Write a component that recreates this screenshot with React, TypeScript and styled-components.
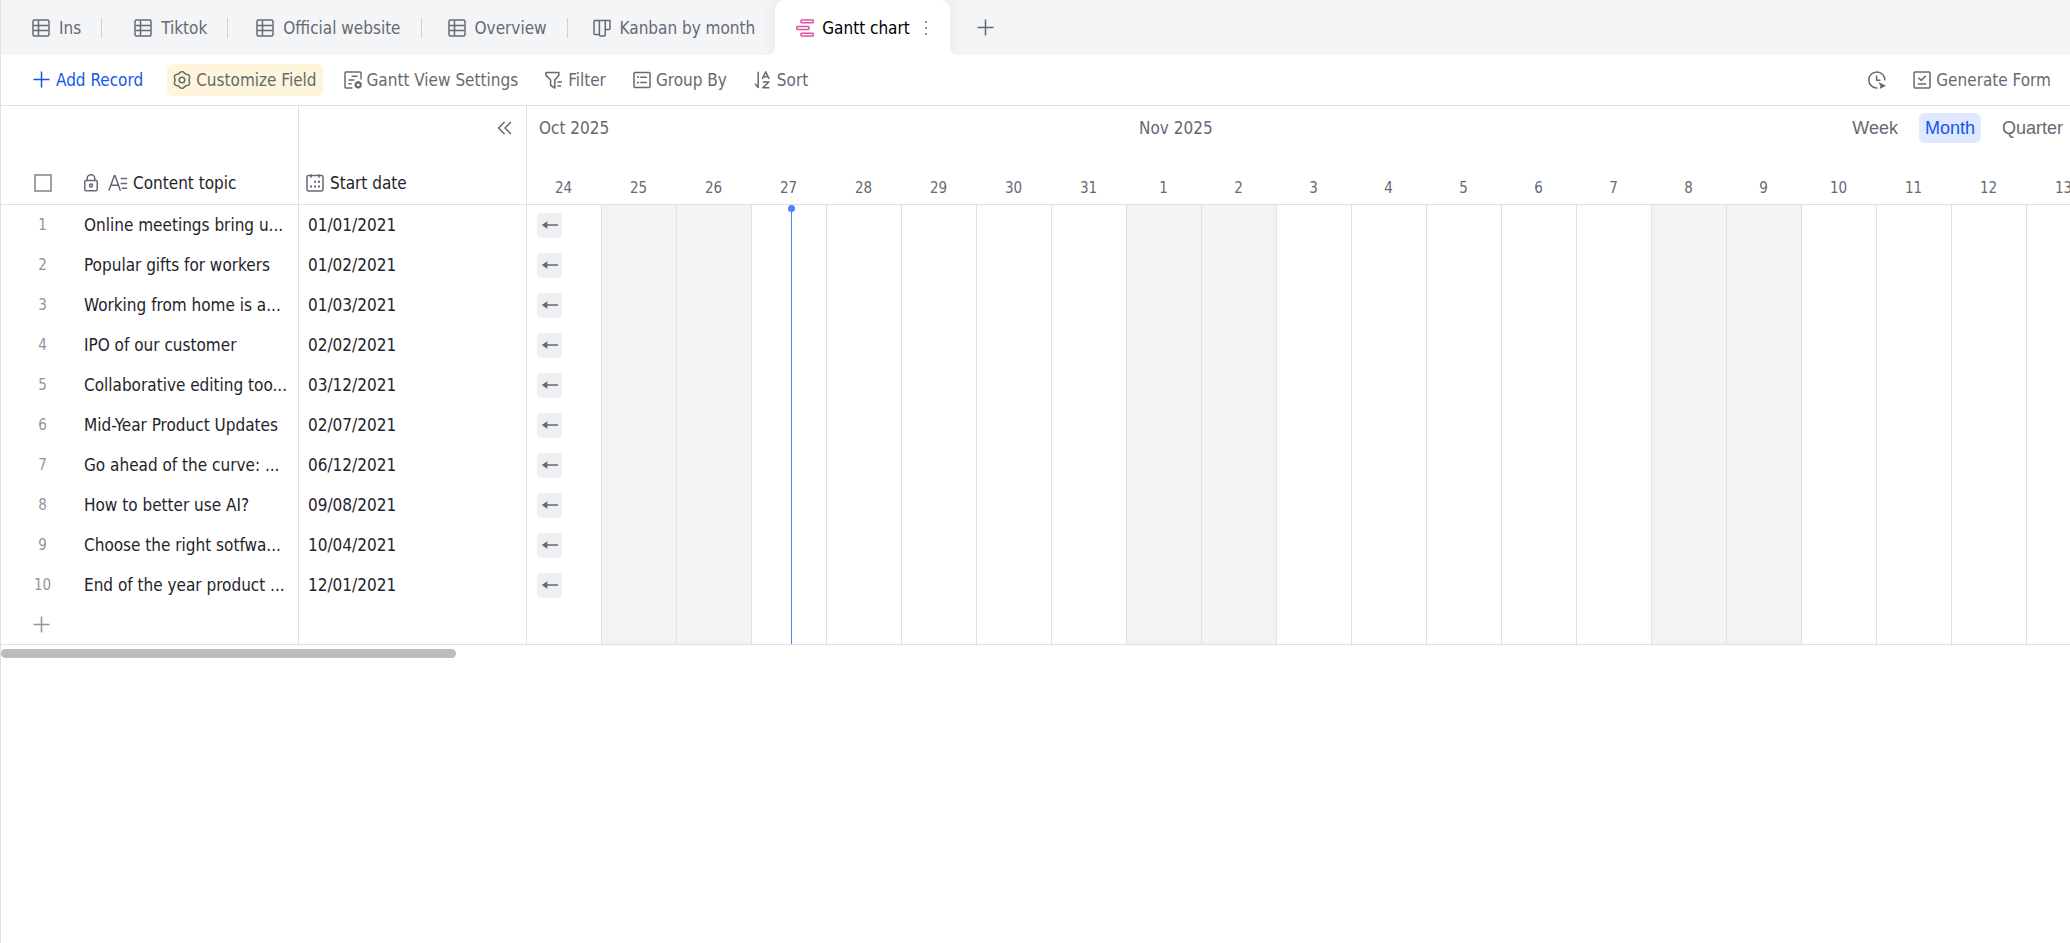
import React from 'react';
import styled, { createGlobalStyle, css } from 'styled-components';

const color = {
  line: '#dee0e3',
  bar: '#f4f5f7',
  text: '#1f2329',
  muted: '#646a73',
  faint: '#8f959e',
  primary: '#1456f0',
  today: '#5083fb',
};

const DAY_WIDTH = 75;

const GlobalStyle = createGlobalStyle`
  *, *::before, *::after { box-sizing: border-box; }
  body {
    margin: 0;
    background: #fff;
    color: ${color.text};
    font-family: "DejaVu Sans Condensed", "DejaVu Sans", sans-serif;
    font-size: 17px;
    line-height: 24px;
  }
  button {
    font: inherit;
    color: inherit;
    border: 0;
    padding: 0;
    background: none;
    cursor: pointer;
    white-space: nowrap;
  }
`;

const Page = styled.div`
  min-height: 100vh;
  border-left: 1px solid ${color.line};
`;

/* ---------- icons ---------- */

const IconBase = styled.svg`
  flex: none;
  display: block;
  fill: none;
  stroke: currentColor;
  stroke-width: 1.5;
  stroke-linejoin: round;
`;

const Icon = ({ width = 18, children }: { width?: number; children: React.ReactNode }) => (
  <IconBase width={width} height={18} viewBox={`0 0 ${width} 18`} aria-hidden="true">
    {children}
  </IconBase>
);

const TableIcon = () => (
  <Icon>
    <rect x="1" y="1" width="16" height="16" rx="1.5" />
    <path d="M1.5 6.5H16.5M1.5 11.5H16.5M6.5 1.5V16.5" />
  </Icon>
);

const KanbanIcon = () => (
  <Icon>
    <path d="M1 1.5H17V9.6a1 1 0 0 1-1 1H12.3V1.5M1 1.5V14.4a1 1 0 0 0 1 1H6M6.4 1.5V15.9a1 1 0 0 0 1 1H11.2a1 1 0 0 0 1-1V10" />
  </Icon>
);

const GanttIcon = () => (
  <Icon>
    <rect x="5" y="1" width="12.2" height="2.8" rx="0.6" />
    <rect x="0.8" y="7.6" width="12.2" height="2.8" rx="0.6" />
    <rect x="5" y="14.2" width="12.2" height="2.8" rx="0.6" />
  </Icon>
);

const PlusIcon = () => (
  <Icon>
    <path d="M8.5 0.5V16.5M0.5 8.5H16.5" />
  </Icon>
);

const MoreIcon = () => (
  <Icon width={4}>
    <path d="M1 3h2M1 9h2M1 15h2" strokeWidth="2" />
  </Icon>
);

const gearOutline =
  Array.from({ length: 72 }, (_, i) => {
    const angle = (i / 72) * Math.PI * 2;
    const radius = 7.7 + 0.75 * Math.cos(6 * (angle - Math.PI / 2));
    const x = 9 + radius * Math.cos(angle);
    const y = 9 + radius * Math.sin(angle);
    return `${i === 0 ? 'M' : 'L'}${x.toFixed(2)} ${y.toFixed(2)}`;
  }).join('') + 'Z';

const GearIcon = () => (
  <Icon>
    <path d={gearOutline} />
    <circle cx="9" cy="9" r="2.8" />
  </Icon>
);

const ViewSettingsIcon = () => (
  <Icon>
    <path d="M8.4 17H2a1 1 0 0 1-1-1V2a1 1 0 0 1 1-1H16a1 1 0 0 1 1 1V8.4" />
    <path d="M7.6 5.2H13.6M4.4 9H10.4M4.4 12.8H7.6" />
    <path d="M14.2 11L16.6 12.4V15.2L14.2 16.6L11.8 15.2V12.4Z" strokeWidth="2.2" />
  </Icon>
);

const FilterIcon = () => (
  <Icon>
    <path d="M1 1.4H13.8V4.4L9.8 9V17L5.6 14.4V9L1 4.4Z" />
    <path d="M12.4 11H17M12.4 15H16" />
  </Icon>
);

const GroupIcon = () => (
  <Icon>
    <rect x="1" y="1.5" width="16" height="15" rx="1" />
    <path d="M7.2 6.2H13.8M7.2 11.6H13.8" />
    <path d="M4 6.2H5.8M4 11.6H5.8" strokeWidth="1.8" />
  </Icon>
);

const SortIcon = () => (
  <Icon>
    <path d="M4.2 0.8V16.6L1 12.8" />
    <path d="M8.2 8L11.7 0.8L15.2 8M9.4 5.8H14" />
    <path d="M8.8 11H14.8L8.8 16.8H15.4" />
  </Icon>
);

const ClockIcon = () => (
  <Icon>
    <path d="M9.4 16.9A8 8 0 1 1 16.8 9.4" />
    <path d="M8.6 4.4V9.2H12.4" />
    <path d="M10.4 10.9L18 14.8L11.6 18L12.4 15Z" fill="currentColor" stroke="none" />
  </Icon>
);

const FormIcon = () => (
  <Icon>
    <rect x="1" y="1" width="16" height="16" rx="1" />
    <path d="M5.4 6.8L8.2 9.4L12.8 4.8M4.8 13H13.2" />
  </Icon>
);

const CollapseIcon = () => (
  <Icon>
    <path d="M9.5 3L3.5 9L9.5 15M16 3L10 9L16 15" />
  </Icon>
);

const LockIcon = () => (
  <Icon width={14}>
    <rect x="0.8" y="6.4" width="12.4" height="10.4" rx="1" />
    <path d="M3.2 6.2V4.4A3.8 3.6 0 0 1 10.8 4.4V6.2" />
    <circle cx="7" cy="11.4" r="1.5" />
  </Icon>
);

const TextFieldIcon = () => (
  <Icon width={20}>
    <path d="M0.8 16.8L6.4 1.6H7L12.4 16.8M3 11.2H10.4" />
    <path d="M12.6 4.4H19.2M12.6 9.4H19.2M13.8 14.2H19.2" />
  </Icon>
);

const CalendarIcon = () => (
  <Icon>
    <rect x="1" y="1.6" width="16" height="15.4" rx="1.4" />
    <path d="M5 0.2V3.8M13 0.2V3.8" />
    <path d="M8 7.8h2M12 7.8h2M4 12.4h2M8 12.4h2M12 12.4h2" strokeWidth="2" />
  </Icon>
);

const ArrowLeftIcon = () => (
  <Icon>
    <path d="M5 9H17" />
    <path d="M0.8 9L6.4 5.2V12.8Z" fill="currentColor" stroke="none" />
  </Icon>
);

/* ---------- view tabs ---------- */

const TabBar = styled.nav`
  display: flex;
  align-items: center;
  height: 55px;
  background: ${color.bar};
  color: ${color.muted};
`;

const Tab = styled.button<{ $lead: number; $divider: boolean }>`
  display: flex;
  align-items: center;
  gap: 9px;
  padding: 0 20px 0 ${p => p.$lead}px;
  ${p => p.$divider && css`
    height: 20px;
    border-right: 1px solid #cfd2d6;
  `}
`;

const ActiveTab = styled.div`
  position: relative;
  display: flex;
  align-items: center;
  gap: 14px;
  align-self: stretch;
  padding: 0 22px 0 21px;
  border-radius: 10px 10px 0 0;
  background: #fff;
  box-shadow: 0 0 16px rgba(31, 35, 41, 0.08);
  clip-path: inset(0 -24px 0 -24px);

  &::before, &::after {
    content: '';
    position: absolute;
    bottom: 0;
    width: 8px;
    height: 8px;
  }
  &::before {
    right: 100%;
    background: radial-gradient(circle at 0 0, transparent 8px, #fff 8px);
  }
  &::after {
    left: 100%;
    background: radial-gradient(circle at 100% 0, transparent 8px, #fff 8px);
  }
`;

const ActiveTabName = styled.button`
  display: flex;
  align-items: center;
  gap: 8px;
  color: #000;
  svg { color: #e052a6; }
`;

const IconButton = styled.button<{ $tone?: string }>`
  display: flex;
  color: ${p => p.$tone ?? color.muted};
`;

const AddView = styled(IconButton)`
  margin-left: 27px;
`;

/* ---------- toolbar ---------- */

const Toolbar = styled.div`
  display: flex;
  justify-content: space-between;
  align-items: center;
  height: 51px;
  padding: 0 13px 0 26px;
  border-bottom: 1px solid ${color.line};
`;

const ToolGroup = styled.div`
  display: flex;
  gap: 15px;
`;

const Tool = styled.button<{ $kind?: 'primary' | 'highlight' }>`
  display: flex;
  align-items: center;
  gap: 5px;
  height: 32px;
  padding: 0 6px;
  border-radius: 6px;
  color: ${p => (p.$kind === 'primary' ? color.primary : color.muted)};
  background: ${p => (p.$kind === 'highlight' ? '#fff5db' : 'transparent')};
  margin-right: ${p => (p.$kind === 'primary' ? 3 : 0)}px;
`;

/* ---------- record table ---------- */

const Board = styled.main`
  display: flex;
`;

const Records = styled.table`
  flex: none;
  width: 526px;
  table-layout: fixed;
  border-collapse: separate;
  border-spacing: 0;
  border-right: 1px solid ${color.line};
`;

const IndexCol = styled.col` width: 83px; `;
const TopicCol = styled.col` width: 215px; `;

const HeadCell = styled.th<{ $ruled?: boolean; $center?: boolean }>`
  height: 99px;
  padding: 0 0 9px;
  vertical-align: bottom;
  font-weight: normal;
  text-align: ${p => (p.$center ? 'center' : 'left')};
  border-bottom: 1px solid ${color.line};
  border-right: ${p => (p.$ruled ? `1px solid ${color.line}` : '0')};
`;

const FieldName = styled.div<{ $gap: number }>`
  display: flex;
  align-items: center;
  gap: ${p => p.$gap}px;
  svg { color: ${color.muted}; }
`;

const DateHead = styled.div`
  display: flex;
  flex-direction: column;
  gap: 34px;
  padding: 0 13px 0 7px;
`;

const Collapse = styled(IconButton)`
  align-self: flex-end;
`;

const Checkbox = styled.input`
  appearance: none;
  display: block;
  width: 18px;
  height: 18px;
  margin: 0 auto 3px;
  border: 2px solid #9ba1a9;
  background: #fff;
`;

const Cell = styled.td<{ $ruled?: boolean; $inset?: number; $last?: boolean }>`
  height: 40px;
  padding: 0 0 0 ${p => p.$inset ?? 0}px;
  overflow: hidden;
  white-space: nowrap;
  border-right: ${p => (p.$ruled ? `1px solid ${color.line}` : '0')};
  border-bottom: ${p => (p.$last ? `1px solid ${color.line}` : '0')};
`;

const IndexCell = styled(Cell)`
  text-align: center;
  font-size: 15px;
  color: ${color.faint};
`;

const AddRow = styled(IconButton)`
  margin-left: 32px;
`;

/* ---------- timeline ---------- */

const Timeline = styled.section`
  position: relative;
  flex: 1;
  min-width: 0;
  overflow: hidden;
`;

const TimelineHead = styled.div`
  display: flex;
  height: 99px;
  border-bottom: 1px solid ${color.line};
`;

const MonthBlock = styled.div`
  display: flex;
  flex-direction: column;
  justify-content: space-between;
  padding: 10px 0 4px;
  color: ${color.muted};
`;

const MonthName = styled.div`
  padding-left: 12px;
`;

const DayNames = styled.div`
  display: flex;
  font-size: 15px;
`;

const DayName = styled.div`
  flex: none;
  width: ${DAY_WIDTH}px;
  padding-right: 2px;
  text-align: center;
`;

const TimelineBody = styled.div`
  display: grid;
  border-bottom: 1px solid ${color.line};
  > * { grid-area: 1 / 1; }
`;

const DayColumns = styled.div`
  display: flex;
`;

const DayColumn = styled.div<{ $weekend: boolean }>`
  position: relative;
  flex: none;
  width: ${DAY_WIDTH}px;
  border-right: 1px solid ${color.line};
  background: ${p => (p.$weekend ? '#f3f3f3' : '#fff')};
`;

const TodayLine = styled.div`
  position: absolute;
  top: 0;
  bottom: 0;
  left: 39px;
  width: 1px;
  background: ${color.today};
  &::before {
    content: '';
    position: absolute;
    top: 0;
    left: -3px;
    width: 7px;
    height: 7px;
    border-radius: 50%;
    background: ${color.today};
  }
`;

const JumpList = styled.div`
  position: relative;
  justify-self: start;
  padding: 0 0 39px 10px;
`;

const JumpRow = styled.div`
  display: flex;
  align-items: center;
  height: 40px;
`;

const JumpButton = styled.button`
  display: flex;
  align-items: center;
  justify-content: center;
  width: 25px;
  height: 25px;
  border-radius: 4px;
  background: #eff0f1;
  color: ${color.muted};
`;

const ScaleSwitch = styled.div`
  position: absolute;
  top: 7px;
  right: 1px;
  display: flex;
  gap: 15px;
  background: #fff;
`;

const Scale = styled.button<{ $active: boolean }>`
  height: 30px;
  padding: 0 6px;
  border-radius: 6px;
  font-family: "Liberation Sans", Arial, sans-serif;
  font-size: 18px;
  color: ${p => (p.$active ? color.primary : color.muted)};
  background: ${p => (p.$active ? '#e0e9ff' : 'transparent')};
`;

const ScrollThumb = styled.div`
  width: 22%;
  height: 9px;
  margin-top: 4px;
  border-radius: 5px;
  background: #bbbcbe;
`;

/* ---------- data ---------- */

const tabs = [
  { name: 'Ins', icon: <TableIcon />, lead: 31 },
  { name: 'Tiktok', icon: <TableIcon />, lead: 32 },
  { name: 'Official website', icon: <TableIcon />, lead: 28 },
  { name: 'Overview', icon: <TableIcon />, lead: 26 },
  { name: 'Kanban by month', icon: <KanbanIcon />, lead: 25 },
];

const records = [
  ['Online meetings bring u...', '01/01/2021'],
  ['Popular gifts for workers', '01/02/2021'],
  ['Working from home is a...', '01/03/2021'],
  ['IPO of our customer', '02/02/2021'],
  ['Collaborative editing too...', '03/12/2021'],
  ['Mid-Year Product Updates', '02/07/2021'],
  ['Go ahead of the curve: ...', '06/12/2021'],
  ['How to better use AI?', '09/08/2021'],
  ['Choose the right sotfwa...', '10/04/2021'],
  ['End of the year product ...', '12/01/2021'],
];

const range = (from: number, to: number) => Array.from({ length: to - from + 1 }, (_, i) => from + i);

const months = [
  { name: 'Oct 2025', index: 9, days: range(24, 31) },
  { name: 'Nov 2025', index: 10, days: range(1, 13) },
];

const isWeekend = (month: number, day: number) => [0, 6].includes(new Date(2025, month, day).getDay());

export default function App() {
  const [scale, setScale] = React.useState('Month');

  return (
    <Page>
      <GlobalStyle />
      <TabBar aria-label="Views">
        {tabs.map((tab, i) => (
          <Tab key={tab.name} $lead={tab.lead} $divider={i < tabs.length - 1}>
            {tab.icon}
            {tab.name}
          </Tab>
        ))}
        <ActiveTab>
          <ActiveTabName aria-current="page">
            <GanttIcon />
            Gantt chart
          </ActiveTabName>
          <IconButton $tone={color.faint} aria-label="View options"><MoreIcon /></IconButton>
        </ActiveTab>
        <AddView aria-label="Add view"><PlusIcon /></AddView>
      </TabBar>

      <Toolbar>
        <ToolGroup>
          <Tool $kind="primary"><PlusIcon />Add Record</Tool>
          <Tool $kind="highlight"><GearIcon />Customize Field</Tool>
          <Tool><ViewSettingsIcon />Gantt View Settings</Tool>
          <Tool><FilterIcon />Filter</Tool>
          <Tool><GroupIcon />Group By</Tool>
          <Tool><SortIcon />Sort</Tool>
        </ToolGroup>
        <ToolGroup>
          <Tool aria-label="Automation history"><ClockIcon /></Tool>
          <Tool><FormIcon />Generate Form</Tool>
        </ToolGroup>
      </Toolbar>

      <Board>
        <Records>
          <colgroup>
            <IndexCol />
            <TopicCol />
            <col />
          </colgroup>
          <thead>
            <tr>
              <HeadCell $center>
                <Checkbox type="checkbox" aria-label="Select all records" />
              </HeadCell>
              <HeadCell $ruled>
                <FieldName $gap={10}>
                  <LockIcon />
                  <FieldName as="span" $gap={5}>
                    <TextFieldIcon />
                    Content topic
                  </FieldName>
                </FieldName>
              </HeadCell>
              <HeadCell>
                <DateHead>
                  <Collapse aria-label="Collapse records"><CollapseIcon /></Collapse>
                  <FieldName $gap={6}>
                    <CalendarIcon />
                    Start date
                  </FieldName>
                </DateHead>
              </HeadCell>
            </tr>
          </thead>
          <tbody>
            {records.map(([topic, date], i) => (
              <tr key={topic}>
                <IndexCell>{i + 1}</IndexCell>
                <Cell $ruled>{topic}</Cell>
                <Cell $inset={9}>{date}</Cell>
              </tr>
            ))}
            <tr>
              <Cell $last><AddRow $tone={color.faint} aria-label="Add row"><PlusIcon /></AddRow></Cell>
              <Cell $last $ruled />
              <Cell $last />
            </tr>
          </tbody>
        </Records>

        <Timeline aria-label="Timeline">
          <TimelineHead>
            {months.map(month => (
              <MonthBlock key={month.name}>
                <MonthName>{month.name}</MonthName>
                <DayNames>
                  {month.days.map(day => <DayName key={day}>{day}</DayName>)}
                </DayNames>
              </MonthBlock>
            ))}
          </TimelineHead>
          <ScaleSwitch role="group" aria-label="Time scale">
            {['Week', 'Month', 'Quarter'].map(name => (
              <Scale key={name} $active={name === scale} aria-pressed={name === scale} onClick={() => setScale(name)}>
                {name}
              </Scale>
            ))}
          </ScaleSwitch>
          <TimelineBody>
            <DayColumns>
              {months.flatMap(month => month.days.map(day => (
                <DayColumn key={`${month.name}-${day}`} $weekend={isWeekend(month.index, day)}>
                  {month.index === 9 && day === 27 && <TodayLine />}
                </DayColumn>
              )))}
            </DayColumns>
            <JumpList>
              {records.map(([topic]) => (
                <JumpRow key={topic}>
                  <JumpButton aria-label={`Scroll to ${topic}`}><ArrowLeftIcon /></JumpButton>
                </JumpRow>
              ))}
            </JumpList>
          </TimelineBody>
        </Timeline>
      </Board>
      <ScrollThumb />
    </Page>
  );
}
